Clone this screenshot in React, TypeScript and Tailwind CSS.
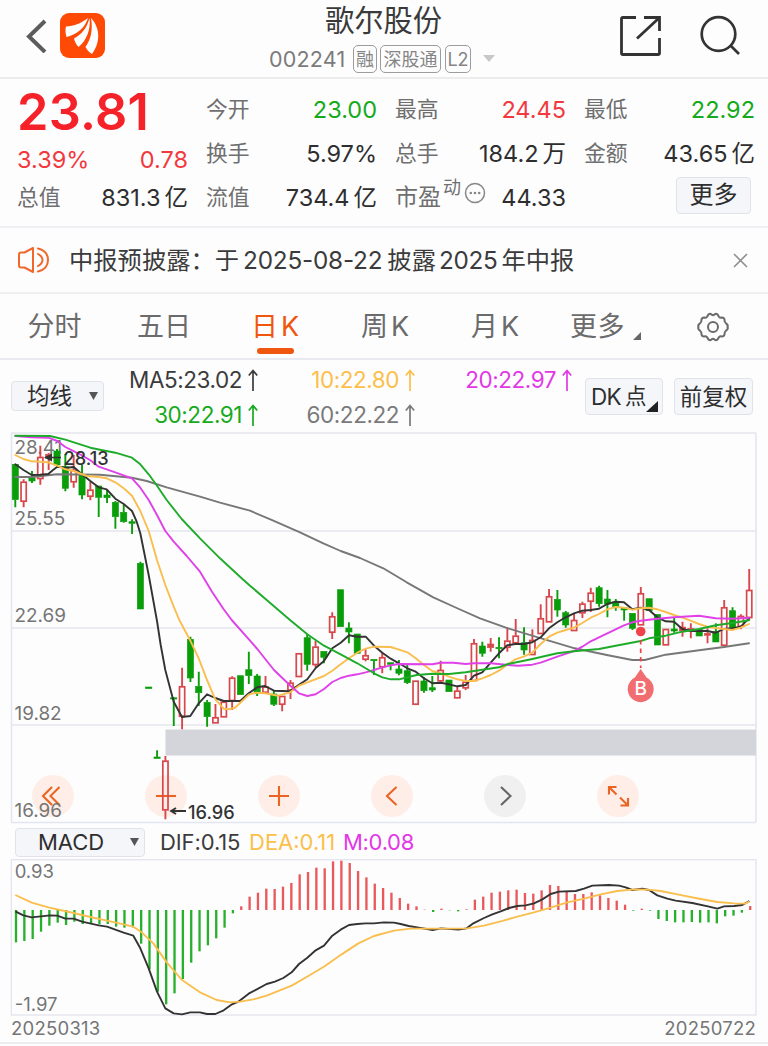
import type { ReactNode } from 'react';

type Candle = [up: 0 | 1, high: number, top: number, bottom: number, low: number];

const STEP = 8.34;
const FIRST_X = 15.3;

const RED = '#d8474b';
const GREEN = '#0a9d0a';

// [rising, high, body top, body bottom, low]
const CANDLES: Candle[] = [
    [0, 464, 464.3, 499.7, 507.3], [1, 479.3, 481.7, 501.7, 507.3], [0, 471, 477.7, 481, 483], [1, 445.7, 457, 479, 484.7],
    [1, 453, 454.3, 458, 470], [0, 449, 451, 465, 467], [0, 454, 466.7, 488.3, 491.3], [1, 455, 470, 482.3, 487.7],
    [0, 465, 475, 495, 499.3], [1, 481.7, 489.7, 496.7, 500.3], [0, 486, 486, 497.3, 517], [0, 490, 495, 497.7, 503],
    [0, 501, 502.3, 516.7, 528.7], [0, 505, 512.3, 521.7, 522.7], [0, 519.3, 521.7, 523.3, 534], [0, 561.7, 563.3, 609, 609],
    [0, 687, 687, 688.6, 688.6], [0, 750.3, 757, 758.5, 758.5], [1, 756, 760.7, 810.3, 819.3], [0, 697, 697.8, 699, 726],
    [1, 667.7, 686.3, 716.7, 729.3], [0, 636.7, 639.3, 678, 682], [0, 671.7, 686.3, 692.7, 706], [0, 700, 702.3, 716.7, 726.7],
    [1, 704, 717.3, 723.3, 723.3], [1, 701.7, 701.7, 717.3, 717.3], [1, 676.3, 677.7, 701, 710], [0, 675.7, 675.7, 694.7, 694.7],
    [0, 651.7, 669.7, 675.7, 684], [0, 674, 676, 693.3, 696], [1, 676, 686.7, 692.7, 692.7], [0, 690.7, 694, 704.3, 706],
    [1, 696, 696, 704.7, 711.3], [1, 680, 682.7, 690.7, 699], [1, 653.3, 653.3, 677, 677], [0, 634, 637.7, 664.3, 670.7],
    [1, 640.7, 646.7, 665, 667.3], [0, 651.3, 651.3, 657.3, 663.3], [1, 612.3, 616.3, 632.7, 639], [0, 589.7, 589.7, 626.7, 626.7],
    [0, 622.3, 628, 632, 643.3], [0, 634, 634, 653.3, 653.3], [1, 649.3, 655.3, 659.7, 661.3], [0, 659.3, 659.3, 660.7, 675],
    [1, 652.7, 657.3, 667.3, 673.3], [0, 662.7, 662.7, 664.3, 670.3], [0, 660, 669, 673.3, 675.3], [0, 665, 670.7, 682.7, 684],
    [1, 680.7, 680.7, 704.7, 704.7], [0, 677, 681, 690.7, 692.7], [0, 676, 687.7, 690, 692], [1, 660.7, 670, 681.3, 682],
    [0, 680, 680, 691.7, 691.7], [1, 686.7, 690.7, 698.3, 698.3], [1, 675, 681.7, 688.3, 690], [1, 639, 643.3, 681, 681],
    [0, 641.7, 646, 653.3, 656.7], [1, 638, 644, 647.7, 651.7], [0, 637.3, 647.3, 648.7, 658.3], [1, 627.3, 640.7, 647.7, 651.7],
    [1, 619, 635.7, 643.3, 645], [0, 627.3, 642.7, 650, 654.7], [1, 629.3, 640, 655, 655], [1, 604.3, 618.3, 634, 634],
    [1, 589, 596.3, 622.3, 622.3], [0, 590, 599.3, 610, 616.7], [0, 611, 612.7, 625, 627.7], [1, 614, 620, 631, 631],
    [1, 601.7, 603.7, 613.3, 618], [1, 587.7, 592.7, 601.7, 612], [0, 585.7, 587.7, 603.7, 606.7], [0, 590, 599, 604, 617.3],
    [0, 599, 602, 606.7, 610.7], [0, 607.7, 607.7, 610, 620.7], [0, 613.3, 613.3, 628.3, 630], [1, 587, 593.3, 625.3, 625.3],
    [0, 598.7, 598.7, 610.7, 610.7], [0, 614.3, 614.3, 645, 645], [1, 629, 629, 645.3, 645.3], [0, 618, 629, 631, 632.7],
    [1, 621.7, 627, 631, 636.7], [1, 623.3, 628.3, 630.7, 638.3], [0, 629.3, 629.3, 636, 636], [1, 628.3, 633.3, 635.3, 643.3],
    [0, 623.3, 631.7, 642, 642], [1, 600, 607.3, 645.7, 645.7], [0, 607.3, 610.7, 627.7, 630], [1, 614.3, 616, 626.7, 629.3],
    [1, 569, 590, 618, 620],
];

const MA_LINES = [
    { color: '#777777', points: '15.3,477 32,477 57,474.3 100,474.7 132,477.7 146.7,481 166.7,487.3 200,496.7 220,502.7 250,510.7 273.3,520.7 300,532.3 323.3,543.3 340.7,551 360,558 383.3,568.3 406.7,582.3 433.3,597.3 456.7,608 480,618.3 508,628.3 541.3,638.3 574.7,648.3 608,655.3 632.3,660 644.7,660 665.7,654.7 699,650.3 724,647 749,643.3' },
    { color: '#333333', points: '15.3,464.3 23.5,470 31.7,475 40,474.7 48.3,474 53,470 57.3,466.7 66.7,467.7 73.7,467 82,474.3 90.3,481 98.7,487.3 106.7,489.3 115.3,498.7 123.7,504 132,511 136.7,521.7 140.3,533.3 148.7,575 157,621 160.7,645 165.3,670 173.7,701.7 182,717 190.3,716 198.7,703.3 207,694.3 215.3,698 223.7,701 240.3,701 248.7,693.3 257.3,687.3 265,686 274,690.7 289.3,691.3 299,684.7 307.3,679.3 315.7,668 324,661 332.3,648.3 340.7,642.7 349,635.3 357.3,636.7 365.7,636.7 374,645.7 382.3,652.7 390.7,658.7 399,663.3 407.3,668.3 415.7,671.7 424,678.3 432.3,683.3 440.7,682.7 449,684.3 457.3,686.3 465.7,685 474,675.7 482.3,672.3 490.7,662.7 499,653.3 507.3,645.3 515.3,644 523.7,644 532.3,642.3 540.7,637.3 549,628.3 557.3,622.3 565.7,617.3 574,613.3 582.3,610.7 590.7,610 599,608.7 607.3,604 615.7,601.7 624,602.3 632.3,609.3 640.7,607.7 649,610 657.3,617.3 665.7,621.3 674,621.7 682.3,629 690.7,631 699,630.7 707.3,631 715.7,632.7 724,629 732.3,628.3 740.7,626.7 749,618.3' },
    { color: '#f9be4d', points: '15.3,455 23.3,459 31.7,461.3 48.3,462.3 57.3,465.7 65.3,469.3 73.7,471 86.7,476 98.7,477 106.7,478.3 115.3,482.3 123.7,488.3 132,495.7 140.3,511 148.7,531 157,560 165.3,585 173.7,606.7 179.3,620 190.3,640.7 198.7,658.3 207,680 215.3,699.3 223.7,708.7 228.3,709.3 234.7,708 240.3,702.7 248.7,694.7 256,692.7 265,693.3 278.3,695.7 289.3,692.7 299,685.7 307.3,682.3 324,676 332.3,670.7 340.7,664.3 349,658.3 357.3,652.7 365.7,648.7 374,646.7 390.7,647 399,649.7 407.3,652.3 415.7,658.3 424,665 432.3,671 440.7,673.3 449,676.7 457.3,679.3 465.7,681 474,681 482.3,678.3 490.7,675 499,670.7 508,664.3 515.3,659.3 523.7,656.7 532.3,652.7 540.7,644 549,636.7 557.3,632.7 565.7,630 574,627.7 582.3,623 590.7,617.7 599,614 607.3,609.3 615.7,607 624,607.7 632.3,609.7 640.7,608.3 649,607.7 657.3,609.3 665.7,612 674,615 682.3,617.7 690.7,620.7 699,624 707.3,626.7 715.7,628 732.3,630 740.7,627.7 749,624' },
    { color: '#e040e8', points: '15.3,436 31.7,437.3 48.3,437.7 57.3,441 65.3,447 80,454.3 90.3,460.3 98.7,466.7 115.3,472.3 132,478.3 140.3,487.7 148.7,500 157,515 165.3,531 173.7,541.7 186.7,556 200,571.7 212,591.7 223.7,609.3 231.7,620 250,640.7 257.3,649 274,670 290.7,686 299,693.3 307.3,696 315.7,694.3 324,689 332.3,682 340.7,678 349,675.7 357.3,674.3 365.7,672.3 374,670 382.3,667.3 390.7,665.3 399,664 432.3,664.3 440.7,662.7 453.3,662.7 465.7,664 474,663.3 490.7,663.3 508,665 518,665.7 532.3,664.7 540.7,662.7 557.3,656.7 574,651 582.3,646.7 590.7,641.3 607.3,633.3 624,625.3 632.3,622.3 640.7,620.7 657.3,618.7 674,617.3 699,615.7 715.7,618.3 732.3,618.7 749,617.7' },
    { color: '#1fab2a', points: '15.3,435.7 50,436 65.3,439.7 90.3,447.7 100,449.7 115.3,452.7 132,457.7 140.3,464.3 148.7,474.3 157,485.7 166.7,500 181.7,519 200,538.3 220,558.3 240,576.7 250,585.7 266.7,600 290,620 307.3,634.3 324,645.7 340.7,654.3 357.3,663.3 374,673.3 382.3,677.3 390.7,679.3 399,679.3 416.7,675 432.3,673.7 449,674 465.7,672.3 482.3,669.7 499,667.3 508,664 532.3,659 557.3,653.3 574,651.3 599,649 615.7,645.7 640.7,641 649,638.3 665.7,635.7 682.3,631.7 699,629 715.7,625.3 732.3,623 749,620.3' },
];

// bar heights, positive is red and negative is green
const MACD_BARS = [
    -97, -93, -87, -65, -47, -38, -45, -35, -42, -40, -43, -42, -50, -53, -52, -101, -178, -245, -283, -250, -207, -158, -124, -106, -85, -53,
    -10, 11, 40, 52, 64, 63, 70, 81, 107, 114, 127, 125, 146, 148, 141, 117, 98, 79, 66, 52, 36, 19, 11, 1, -6, 4, -1, -4, 2, 31, 40, 52, 55,
    59, 61, 51, 49, 59, 75, 72, 55, 48, 48, 53, 44, 36, 28, 16, -2, 4, -2, -27, -33, -37, -37, -36, -38, -37, -40, -19, -17, -8, 12,
];

const DIF = '46,274 70,286 95,292 150,286 172,287 196,296 221,296 246,305 296,316 321,320 371,338 400,347 421,385 446,445 471,515 496,565 521,580 546,583 571,577 600,577 621,582 646,582 671,571 696,553 715,545 746,521 800,492 825,485 850,474 875,457 897,432 922,413 947,391 972,377 997,347 1022,329 1047,315 1072,312 1097,310 1122,310 1152,307 1182,308 1202,312 1226,318 1256,323 1298,330 1323,325 1375,329 1400,325 1420,310 1452,294 1477,283 1502,274 1527,264 1552,258 1577,256 1602,250 1627,238 1652,222 1677,215 1727,213 1752,206 1777,197 1827,195 1857,197 1877,202 1897,210 1927,206 1947,210 1972,226 2002,236 2027,242 2077,249 2127,260 2152,266 2172,259 2202,258 2227,255 2248,243';
const DEA = '46,225 95,248 145,262 221,279 271,291 321,302 371,313 400,320 425,337 460,370 500,427 546,480 600,517 650,540 690,547 720,545 760,538 800,527 875,497 925,468 975,438 1025,403 1075,370 1122,348 1182,332 1232,326 1302,326 1402,325 1452,317 1502,304 1552,290 1602,277 1652,263 1702,247 1752,236 1802,223 1852,213 1902,208 1942,209 1982,213 2032,223 2102,237 2152,246 2202,250 2235,251 2248,245';

function Header() {
    return (
        <header className="flex h-[79px] items-start justify-between border-b-2 border-[#ececee]">
            <div className="flex w-[236px] items-center pt-[13px] pl-[26px]">
                <svg width="22" height="34" viewBox="0 0 22 34" fill="none" stroke="#5c5c5c" strokeWidth="4">
                    <path d="M19 2 L3 17.5 L19 33" />
                </svg>
                <svg className="ml-[12px]" width="45" height="45" viewBox="0 0 45 45">
                    <rect width="45" height="45" rx="9" fill="#ff4a05" />
                    <path d="M28 5 C20 11 14 13 6 13.5 C5 17 5.5 20 6.5 24 C16 22 25 15 28 5Z" fill="#fff" />
                    <path d="M29.5 5 C27 15 22 21 14 25.5 C15 29 16 31 18.5 34 C26 28 31 17 29.5 5Z" fill="#fff" />
                    <path d="M31 5 C33 17 31 26 25.5 34 C27 37 29 39 32 41 C39 32 42 17 31 5Z" fill="#fff" />
                </svg>
            </div>
            <div className="flex flex-col items-center">
                <h1 className="mt-[2px] ml-[3px] text-[29.3px] leading-[38px] text-[#3a3a3a]">歌尔股份</h1>
                <div className="flex h-[38px] items-center gap-[5px] text-[#7b7b7b]">
                    <span className="w-[79px] text-[21.5px] tracking-[0.2px]">002241</span>
                    <Tag className="w-[24px]">融</Tag>
                    <Tag className="-ml-[2px] w-[61px]">深股通</Tag>
                    <Tag className="-ml-[1px] w-[26px]">L2</Tag>
                    <svg className="ml-[7px]" width="12" height="8" viewBox="0 0 12 8"><path d="M0 0H12L6 7Z" fill="#c8c8c8" /></svg>
                </div>
            </div>
            <div className="flex w-[240px] items-center justify-end gap-[39px] pt-[14px] pr-[27px]">
                <svg width="42" height="43" viewBox="0 0 42 43" fill="none" stroke="#333" strokeWidth="2.8">
                    <path d="M17 3.5 H4 Q2.5 3.5 2.5 5 V39 Q2.5 40.5 4 40.5 H39 Q40.5 40.5 40.5 39 V24" />
                    <path d="M18 24.5 L40 4 M25 3.5 H40.5 V17" />
                </svg>
                <svg width="41" height="43" viewBox="0 0 41 43" fill="none" stroke="#333" strokeWidth="2.7">
                    <circle cx="18.5" cy="20" r="16.8" />
                    <path d="M30 31 L39 40" />
                </svg>
            </div>
        </header>
    );
}

function Tag({ children, className }: { children: ReactNode; className: string }) {
    return (
        <span className={`flex h-[28px] shrink-0 items-center justify-center whitespace-nowrap rounded-[5px] border-[1.5px] border-[#9c9c9c] text-[18px] text-[#858585] ${className}`}>
            {children}
        </span>
    );
}

type StatProps = {
    label: string;
    value: string;
    unit?: string;
    color?: string;
}

function Stat({ label, value, unit, color = 'text-[#2e2e2e]' }: StatProps) {
    return (
        <div className="flex h-[44.3px] items-center justify-between">
            <span className="text-[21.8px] text-[#6f6f6f]">{label}</span>
            <span className={`text-[23.5px] ${color}`}>
                {value}
                {unit && <span className="ml-[4px]">{unit}</span>}
            </span>
        </div>
    );
}

function Quote() {
    return (
        <section className="flex h-[149px] border-b-2 border-[#efeff4] pt-[8px] pl-[17px]">
            <div className="w-[171px]">
                <div className="h-[49px] text-[50.5px] leading-[49px] font-semibold tracking-[0.2px] text-[#f62229]">23.81</div>
                <div className="flex h-[39.5px] items-end justify-between pb-[2px] text-[23.5px] leading-[28px] text-[#f2393e]">
                    <span>3.39%</span>
                    <span>0.78</span>
                </div>
                <Stat label="总值" value="831.3" unit="亿" />
            </div>
            <div className="ml-[18px] w-[171px]">
                <Stat label="今开" value="23.00" color="text-[#16aa1c]" />
                <Stat label="换手" value="5.97%" />
                <Stat label="流值" value="734.4" unit="亿" />
            </div>
            <div className="ml-[18px] w-[171px]">
                <Stat label="最高" value="24.45" color="text-[#f2393e]" />
                <Stat label="总手" value="184.2" unit="万" />
                <div className="flex h-[44.3px] items-center">
                    <span className="text-[23px] text-[#6f6f6f]">市盈</span>
                    <span className="mb-[20px] ml-[2px] text-[18px] text-[#6f6f6f]">动</span>
                    <svg className="mb-[10px] ml-[3px]" width="22" height="22" viewBox="0 0 22 22">
                        <circle cx="11" cy="11" r="9.5" fill="none" stroke="#868686" strokeWidth="1.5" />
                        <circle cx="6.8" cy="11" r="1.3" fill="#868686" />
                        <circle cx="11" cy="11" r="1.3" fill="#868686" />
                        <circle cx="15.2" cy="11" r="1.3" fill="#868686" />
                    </svg>
                    <span className="ml-auto text-[23.5px] text-[#2e2e2e]">44.33</span>
                </div>
            </div>
            <div className="ml-[18px] w-[171px]">
                <Stat label="最低" value="22.92" color="text-[#16aa1c]" />
                <Stat label="金额" value="43.65" unit="亿" />
                <button className="mt-[1px] mr-[4px] ml-auto flex h-[37px] w-[75px] items-center justify-center rounded border-[1.5px] border-[#e2e2ea] bg-[#f5f6fa] text-[24px] text-[#2e2e2e]">更多</button>
            </div>
        </section>
    );
}

function Notice() {
    return (
        <section className="flex h-[66px] items-center border-b-2 border-[#efeff2] px-[17px]">
            <svg width="33" height="28" viewBox="0 0 33 28" fill="none" stroke="#f0682c" strokeWidth="2" strokeLinejoin="round" strokeLinecap="round">
                <path d="M2 8.5 Q2 6.5 4 6.5 H7.5 L16 2 V26 L7.5 21.5 H4 Q2 21.5 2 19.5Z" />
                <path d="M21 8 Q25.5 10.5 25.5 14 Q25.5 17.5 21 20" />
                <path d="M21 2.5 Q31 5 31 14 Q31 23 21 25.5" />
            </svg>
            <p className="ml-[19px] text-[24.3px] whitespace-nowrap text-[#3b3b3b]">
                中报预披露：<span className="mr-[4px]">于</span>
                <span className="-tracking-[0.2px]">2025-08-22</span>
                <span className="mr-[3px] ml-[5px]">披露</span>
                <span className="-tracking-[0.3px]">2025</span>
                <span className="ml-[4px]">年中报</span>
            </p>
            <svg className="mr-[3px] ml-auto" width="15" height="15" viewBox="0 0 15 15" stroke="#8e8e8e" strokeWidth="1.6">
                <path d="M1 1 L14 14 M14 1 L1 14" />
            </svg>
        </section>
    );
}

const TABS = [
    { label: '分时', width: 'w-[109px]' },
    { label: '五日', width: 'w-[110px]' },
    { label: '日', suffix: 'K', width: 'w-[112px]', active: true },
    { label: '周', suffix: 'K', width: 'w-[108px]' },
    { label: '月', suffix: 'K', width: 'w-[112px]' },
];

function Tabs() {
    return (
        <nav className="flex h-[66px] border-b-2 border-[#e9e9f1] text-[27px] text-[#6b6b6b]">
            {TABS.map(tab => (
                <div key={tab.label} className={`flex flex-col items-center pt-[12px] ${tab.width}`}>
                    <span className={`leading-[42px] ${tab.active ? 'text-[#f0560e]' : ''}`}>
                        {tab.label}
                        {tab.suffix && <span className="ml-[3px]">{tab.suffix}</span>}
                    </span>
                    {tab.active && <span className="h-[6px] w-[37px] rounded-full bg-[#f0560e]" />}
                </div>
            ))}
            <div className="flex w-[100px] pt-[12px] pl-[19px]">
                <span className="leading-[42px] tracking-[0.5px]">更多</span>
                <svg className="mt-[26px] ml-[8px]" width="8" height="8" viewBox="0 0 8 8"><path d="M8 0V8H0Z" fill="#666" /></svg>
            </div>
            <svg className="mt-[18px] ml-[46px]" width="32" height="30" viewBox="0 0 32 30" fill="none" stroke="#6b6b6b" strokeWidth="2">
                <path d="M11.5 2.5 Q13 1 14.5 2.5 Q16 4 17.5 2.5 Q19 1 20.5 2.5 L22 4.8 Q23 6 25 5.5 Q27 5.5 27.5 7.5 Q27.3 10 29 11.3 Q31.5 13 30.5 15 Q31.5 17 29 18.7 Q27.3 20 27.5 22.5 Q27 24.5 25 24.5 Q23 24 22 25.2 L20.5 27.5 Q19 29 17.5 27.5 Q16 26 14.5 27.5 Q13 29 11.5 27.5 L10 25.2 Q9 24 7 24.5 Q5 24.5 4.5 22.5 Q4.7 20 3 18.7 Q.5 17 1.5 15 Q.5 13 3 11.3 Q4.7 10 4.5 7.5 Q5 5.5 7 5.5 Q9 6 10 4.8Z" />
                <circle cx="16" cy="15" r="5" />
            </svg>
        </nav>
    );
}

function MaValue({ text, className }: { text: string; className: string }) {
    return (
        <span className={`flex items-center justify-end gap-[6px] -tracking-[0.45px] ${className}`}>
            {text}
            <svg width="10" height="22" viewBox="0 0 10 22" fill="none" stroke="currentColor" strokeWidth="1.7">
                <path d="M5 22V2 M.8 6.5L5 1.5L9.2 6.5" />
            </svg>
        </span>
    );
}

function MaBar() {
    return (
        <section className="flex h-[72px] text-[22.5px]">
            <button className="mt-[21px] ml-[11px] flex h-[30px] w-[93px] items-center justify-between rounded border-[1.5px] border-[#e2e2ea] bg-[#f5f6fa] pr-[5px] pl-[15px] text-[22.5px] text-[#2e2e2e]">
                均线
                <svg width="9" height="8" viewBox="0 0 9 8"><path d="M0 0H9L4.5 8Z" fill="#555" /></svg>
            </button>
            <div className="ml-[3px] grid h-[70px] w-[467px] grid-cols-[151px_157px_157px] content-start pt-[3px] leading-[34.5px]">
                <MaValue text="MA5:23.02" className="text-[#3b3b3b]" />
                <MaValue text="10:22.80" className="text-[#fcbf4a]" />
                <MaValue text="20:22.97" className="text-[#e238e6]" />
                <MaValue text="30:22.91" className="text-[#16aa1c]" />
                <MaValue text="60:22.22" className="text-[#7a7a7a]" />
            </div>
            <button className="mt-[18px] ml-[11px] flex h-[37px] w-[78px] items-center rounded border-[1.5px] border-[#e2e2ea] bg-[#f5f6fa] pl-[5px] whitespace-nowrap text-[#2e2e2e]">
                <span className="-tracking-[0.7px]">DK</span><span className="ml-[4px] text-[21.5px]">点</span>
                <svg className="mt-[20px]" width="12" height="11" viewBox="0 0 12 11"><path d="M12 0V11H0Z" fill="#222" /></svg>
            </button>
            <button className="mt-[18px] ml-[11px] flex h-[37px] w-[79px] items-center justify-center rounded border-[1.5px] border-[#e2e2ea] bg-[#f5f6fa] whitespace-nowrap text-[#2e2e2e]">前复权</button>
        </section>
    );
}

function KLineChart() {
    return (
        <svg className="pointer-events-none relative block" width="768" height="392" viewBox="0 432 768 392" fill="none">
            {[433, 531, 628, 725, 822.5].map(y => <path key={y} d={`M11 ${y}H756`} stroke="#e4e5ee" strokeWidth="1.5" />)}
            <path d="M11.5 433V822.5 M756 433V822.5" stroke="#e4e5ee" strokeWidth="1.5" />
            <rect x="165.5" y="729.5" width="590.5" height="26" fill="#d3d5db" />
            <g className="fill-[#757575] text-[18.9px]">
                <text x="14.5" y="453.5">28.41</text>
                <text x="14.5" y="524.5">25.55</text>
                <text x="14.5" y="622">22.69</text>
                <text x="14.5" y="719.5">19.82</text>
                <text x="14.5" y="817">16.96</text>
            </g>
            {CANDLES.map(([up, high, top, bottom, low], i) => {
                const x = FIRST_X + i * STEP;
                const color = up ? RED : GREEN;
                const hollow = up && bottom - top > 4;
                return (
                    <g key={i} stroke={color}>
                        <path d={`M${x} ${high}V${top} M${x} ${bottom}V${low}`} strokeWidth="1.9" />
                        <rect
                            x={hollow ? x - 2.6 : x - 3.1}
                            y={hollow ? top + 0.5 : top}
                            width={hollow ? 5.2 : 6.2}
                            height={Math.max(bottom - top - (hollow ? 1 : 0), 1)}
                            fill={hollow ? 'none' : color}
                            strokeWidth={hollow ? 1.7 : 0.6}
                        />
                    </g>
                );
            })}
            {MA_LINES.map(line => (
                <polyline key={line.color} points={line.points} stroke={line.color} strokeWidth="1.9" strokeLinejoin="round" strokeLinecap="round" />
            ))}
            <path d="M45 457.5H61" stroke="#333" strokeWidth="1.5" />
            <path d="M44 457.5L52 453.5V461.5Z" fill="#333" />
            <text x="63.5" y="464.5" className="fill-[#333] text-[18.2px] font-medium">28.13</text>
            <path d="M171 811H186 M176 808L171 811L176 814" stroke="#333" strokeWidth="1.8" />
            <text x="188" y="818.5" className="fill-[#333] text-[18.2px] font-medium">16.96</text>
            <circle cx="640.7" cy="631.5" r="4.8" fill="#ee4349" />
            <path d="M640.7 640V668" stroke="#ee4349" strokeWidth="1.7" strokeDasharray="4.5 4" />
            <path d="M640.7 669 L646.5 677.5 A13 13 0 1 1 634.9 677.5Z" fill="#f26d70" />
            <text x="640.7" y="695" textAnchor="middle" className="fill-white text-[19px] font-medium">B</text>
        </svg>
    );
}

const CONTROLS = [
    { name: 'first', path: 'M20 12L11 21L20 30 M27.5 12L18.5 21L27.5 30' },
    { name: 'zoom out', path: 'M11 21H31' },
    { name: 'zoom in', path: 'M11 21H31 M21 11V31' },
    { name: 'previous', path: 'M25.5 12L16 21L25.5 30' },
    { name: 'next', path: 'M17 12L26.5 21L17 30', muted: true },
    { name: 'fullscreen', path: 'M12 19.5V12H19.5 M12 12L19.5 19.5 M31 23V30.5H23.5 M31 30.5L23 22.5' },
];

// sits behind the chart so that candles and price labels stay readable
function ChartControls() {
    return (
        <div className="absolute top-[342.5px] left-[31.5px] flex gap-[71.1px]">
            {CONTROLS.map(control => (
                <button
                    key={control.name}
                    aria-label={control.name}
                    className={`size-[42px] rounded-full ${control.muted ? 'bg-[#f0f0f0] text-[#666]' : 'bg-[#feeee7] text-[#ea6423]'}`}
                >
                    <svg width="42" height="42" viewBox="0 0 42 42" fill="none" stroke="currentColor" strokeWidth="2.1">
                        <path d={control.path} />
                    </svg>
                </button>
            ))}
        </div>
    );
}

function MacdHeader() {
    return (
        <div className="flex h-[35px] items-center pl-[15px] text-[22px]">
            <button className="mt-[1px] flex h-[29px] w-[130px] items-center justify-between rounded border-[1.5px] border-[#e2e2ea] bg-[#f5f6fa] pr-[5px] pl-[22px] text-[#2e2e2e]">
                MACD
                <svg width="9" height="8" viewBox="0 0 9 8"><path d="M0 0H9L4.5 8Z" fill="#555" /></svg>
            </button>
            <span className="mt-[1px] ml-[15px] w-[89px] -tracking-[0.1px] text-[#3b3b3b]">DIF:0.15</span>
            <span className="mt-[1px] w-[94px] text-[#fcbf4a]">DEA:0.11</span>
            <span className="mt-[1px] -tracking-[0.3px] text-[#e238e6]">M:0.08</span>
        </div>
    );
}

function MacdChart() {
    return (
        <svg className="block" width="768" height="157" viewBox="0 117 2304 471" fill="none">
            <rect x="34" y="119" width="2234" height="466" stroke="#e4e5ee" strokeWidth="4" />
            {MACD_BARS.map((height, i) => (
                <path
                    key={i}
                    d={`M${48 + i * 25.03} 270v${-height}`}
                    stroke={height > 0 ? '#e9585b' : '#27b02c'}
                    strokeWidth="7"
                />
            ))}
            <g className="fill-[#757575] text-[55.5px]">
                <text x="44" y="174">0.93</text>
                <text x="44" y="573">-1.97</text>
            </g>
            <polyline points={DIF} stroke="#333" strokeWidth="5.7" strokeLinejoin="round" />
            <polyline points={DEA} stroke="#f9be4d" strokeWidth="5.7" strokeLinejoin="round" />
        </svg>
    );
}

export default function App() {
    return (
        <main className="h-[1046px] w-[768px] overflow-hidden bg-[#fdfdfe] font-[Inter,'Noto_Sans_CJK_SC',sans-serif]">
            <Header />
            <Quote />
            <Notice />
            <Tabs />
            <MaBar />
            <div className="relative">
                <ChartControls />
                <KLineChart />
            </div>
            <MacdHeader />
            <MacdChart />
            <footer className="flex h-[28px] items-center justify-between border-b-2 border-[#ededf1] pr-[12px] pl-[11px] text-[18.5px] tracking-[0.25px] text-[#757575]">
                <span>20250313</span>
                <span>20250722</span>
            </footer>
        </main>
    );
}
